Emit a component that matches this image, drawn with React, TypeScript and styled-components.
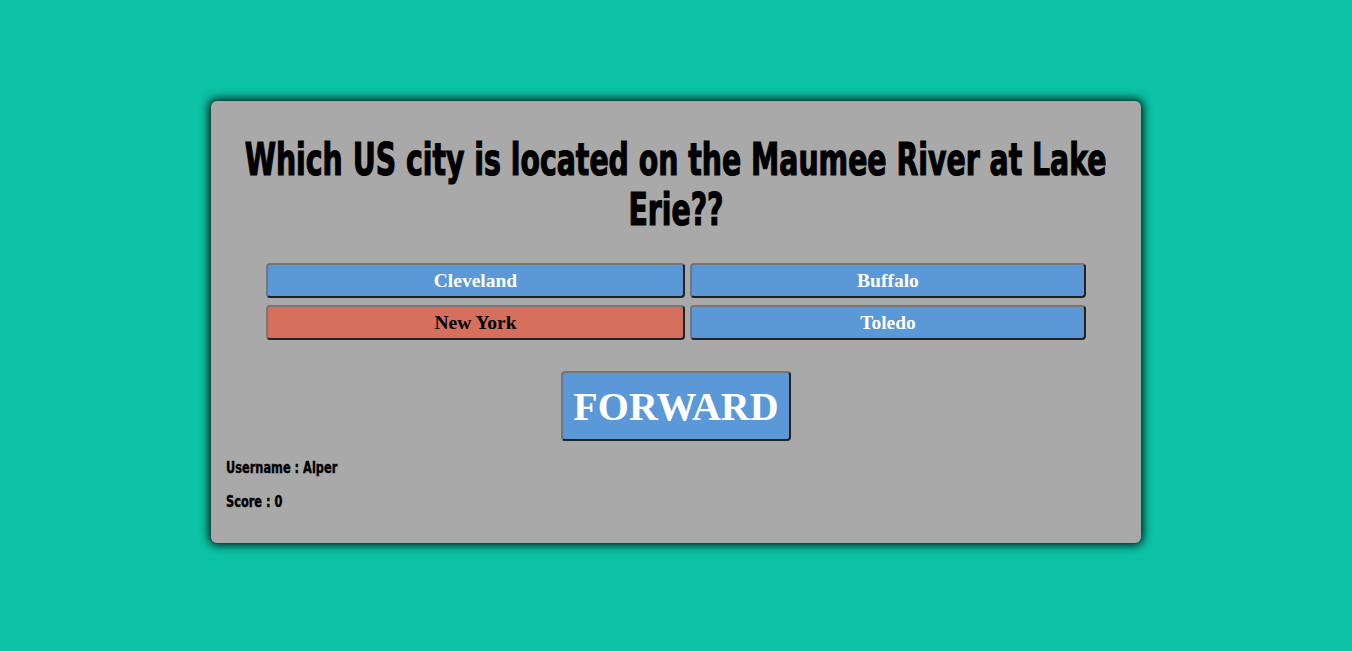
import React from "react";
import styled, { createGlobalStyle } from "styled-components";

const Global = createGlobalStyle`
  html, body {
    margin: 0;
    padding: 0;
    background: #0bc2a5;
    min-height: 100%;
  }
  body {
    height: 651px;
    overflow: hidden;
  }
`;

const Page = styled.div`
  display: flex;
  justify-content: center;
  padding-top: 101px;
`;

const Card = styled.div`
  box-sizing: border-box;
  width: 930px;
  padding: 20px 15px 32px;
  background: #a9a9a9;
  border-radius: 6px;
  box-shadow: 0 0 10px 2px rgba(0, 0, 0, 0.9);
  display: flex;
  flex-direction: column;
`;

const Title = styled.h1`
  margin: 14px 0 0;
  padding: 0 20px;
  display: flex;
  flex-direction: column;
  align-items: center;
  font-family: Impact, "DejaVu Sans Condensed", sans-serif;
  font-weight: bold;
  font-size: 45px;
  line-height: 50px;
  color: #000;
  -webkit-text-stroke: 1.2px #000;
`;

const TitleLine = styled.span<{ $scale: number }>`
  display: block;
  white-space: nowrap;
  transform: scaleX(${(p) => p.$scale});
  transform-origin: center;
`;

const Answers = styled.div`
  margin-top: 28px;
  display: grid;
  grid-template-columns: 419px 396px;
  column-gap: 5px;
  row-gap: 7px;
  justify-content: center;
`;

const Answer = styled.button<{ $wrong?: boolean }>`
  box-sizing: border-box;
  height: 35px;
  background: ${(p) => (p.$wrong ? "#d76f5d" : "#5b98d7")};
  color: ${(p) => (p.$wrong ? "#000" : "#fff")};
  border: 2px solid;
  border-color: #767676 #1f2326 #1f2326 #767676;
  border-radius: 4px;
  font-family: "Liberation Serif", "Times New Roman", serif;
  font-weight: bold;
  font-size: 19.5px;
  padding: 0;
  cursor: pointer;
`;

const Forward = styled.button`
  align-self: center;
  box-sizing: border-box;
  margin-top: 31px;
  width: 230px;
  height: 70px;
  background: #5b98d7;
  color: #fff;
  border: 2px solid;
  border-color: #767676 #1f2326 #1f2326 #767676;
  border-radius: 4px;
  font-family: "Liberation Serif", "Times New Roman", serif;
  font-weight: bold;
  font-size: 40px;
  padding: 0;
  cursor: pointer;
`;

const Info = styled.p<{ $first?: boolean }>`
  margin: ${(p) => (p.$first ? "18px" : "16px")} 0 0;
  font-family: Impact, "DejaVu Sans Condensed", sans-serif;
  font-weight: bold;
  font-size: 16px;
  line-height: 18px;
  color: #000;
  -webkit-text-stroke: 0.4px #000;
  transform: scaleX(0.79);
  transform-origin: left center;
  white-space: nowrap;
`;

export default function App() {
  return (
    <>
      <Global />
      <Page>
        <Card>
          <Title>
            <TitleLine $scale={0.7}>Which US city is located on the Maumee River at Lake</TitleLine>
            <TitleLine $scale={0.7}>Erie??</TitleLine>
          </Title>
          <Answers>
            <Answer>Cleveland</Answer>
            <Answer>Buffalo</Answer>
            <Answer $wrong>New York</Answer>
            <Answer>Toledo</Answer>
          </Answers>
          <Forward>FORWARD</Forward>
          <Info $first>Username : Alper</Info>
          <Info>Score : 0</Info>
        </Card>
      </Page>
    </>
  );
}
